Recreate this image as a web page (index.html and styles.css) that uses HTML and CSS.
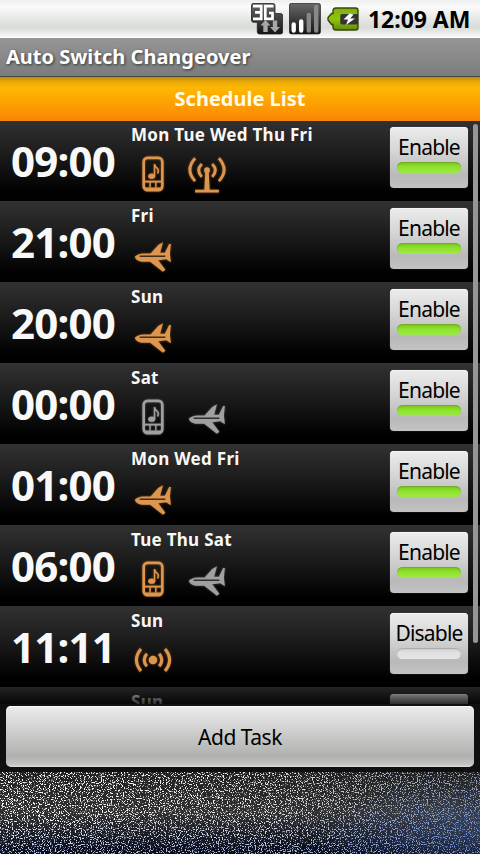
FILE: index.html
```
<!DOCTYPE html>
<html lang="en">
<head>
<meta charset="utf-8">
<title>Auto Switch Changeover</title>
<link rel="stylesheet" href="styles.css">
</head>
<body>
<svg class="defs" width="0" height="0" aria-hidden="true">
  <defs>
    <linearGradient id="dark" x1="0" y1="0" x2="0" y2="1"><stop offset="0" stop-color="#686868"/><stop offset="1" stop-color="#141414"/></linearGradient>
    <linearGradient id="green" x1="0" y1="0" x2="0" y2="1"><stop offset="0" stop-color="#83ad10"/><stop offset=".5" stop-color="#8fc50b"/><stop offset="1" stop-color="#638c08"/></linearGradient>
    <symbol id="phone" viewBox="0 0 40 40">
      <rect x="10.2" y="3" width="19.6" height="34" rx="4" fill="none" stroke="currentColor" stroke-width="2.800"/>
      <path d="M10 28H30" stroke="currentColor" stroke-width="2"/>
      <path d="M10 35H30M16.9 28v6M23 28v6" stroke="currentColor" stroke-width="1.500"/>
      <ellipse cx="18.6" cy="22.3" rx="3.7" ry="2.7" fill="currentColor"/>
      <path d="M21.6 22.5V9.5q.5 3.2 3.400 5.200q1.500 2.200-.3 4.800" fill="none" stroke="currentColor" stroke-width="1.600"/>
    </symbol>
    <symbol id="tower" viewBox="0 0 40 40">
      <path d="M20 16V37M7.500 38H32.500" fill="none" stroke="currentColor" stroke-width="2.700"/>
      <path d="M18.200 17L17.200 38h5.600L21.800 17z" fill="currentColor"/>
      <circle cx="20" cy="16" r="3" fill="currentColor"/>
      <path d="M14.500 9.500q-6.500 6.500 0 13.500M25.500 9.500q6.500 6.500 0 13.500M7.500 3.500q-11 12 0 24M32.500 3.500q11 12 0 24" fill="none" stroke="currentColor" stroke-width="3"/>
    </symbol>
    <symbol id="waves" viewBox="0 0 40 40">
      <circle cx="20" cy="20" r="4.500" fill="currentColor"/>
      <path d="M13.500 13.500q-5.500 6.500 0 13M26.500 13.500q5.500 6.500 0 13M7.300 8.500q-9.500 11.500 0 23M32.700 8.500q9.500 11.500 0 23" fill="none" stroke="currentColor" stroke-width="3.200"/>
    </symbol>
    <symbol id="plane" viewBox="0 0 40 40">
      <path d="M.8 21.800Q4 18.500 10 18.300H17.500L25.500 9.500L30.500 6.500L27.500 17.500H32.500L37 8.500H38.800L37.800 18.500L38.800 27.500L34 24.500L25.500 25.500L33 35.500L30.500 37.500L17 27H8Q2 26 .8 21.800z" fill="currentColor"/>
      <path d="M6 21.300H33" stroke="#000" stroke-opacity=".7" stroke-width="1.600"/>
    </symbol>
  </defs>
</svg>
<main class="screen">
  <header class="status">
    <svg class="sys" width="32" height="32" viewBox="0 0 32 32">
      <path d="M2 .5H22q2 0 2 2V10.500H29.500q2.200 0 2.200 2.200V28.800q0 2.200-2.200 2.200H8.500Q6.300 31 6.300 28.800V19.300H2.500Q.5 19.300 .5 17.300V2.500Q.5 .5 2 .5z" fill="url(#dark)" stroke="#222" stroke-width=".8"/>
      <path d="M2 3.200H10.200V15.800H2M4 9.300H10M22.500 3.200H14.300V15.800H21.500V10H18" fill="none" stroke="#fff" stroke-width="2.700"/>
      <path d="M14.500 17L19.500 22.500H16.700V29H12.300V22.500H9.500zM24 29.500L19 24H21.800V17.500H26.200V24H29z" fill="#a8a8a8"/>
    </svg>
    <svg class="sys" width="32" height="32" viewBox="0 0 32 32">
      <rect x=".4" y=".4" width="31" height="30.500" rx="2" fill="url(#dark)" stroke="#222" stroke-width=".8"/>
      <g stroke-width="4.400" stroke-linecap="round"><path d="M4.700 21.500V27.500M12.200 18.500V27.500" stroke="#fff"/><path d="M19.800 12V27.500M27.200 4V27.500" stroke="#888"/></g>
    </svg>
    <svg class="sys" width="32" height="24" viewBox="0 0 32 24">
      <path d="M9 1H28.500q2.500 0 2.500 2.500V20.500q0 2.500-2.500 2.500H9Q6 23 6 20V17.500H4.500L1 13V10.500L4.500 6.500H6V4Q6 1 9 1z" fill="url(#green)" stroke="#37460f" stroke-width="1.400"/>
      <path d="M15 7H31V17.500H15q-1.700 0-1.700-1.700V8.700Q13.300 7 15 7z" fill="#343434"/>
      <path d="M22.500 6.500L16.500 12.500H21L19 18L28 11.500H23.300L26.500 7.500z" fill="#fff"/>
    </svg>
    <span class="clock">12:09 AM</span>
  </header>
  <div class="title"><span>Auto Switch Changeover</span></div>
  <h1 class="heading"><span>Schedule List</span></h1>
  <section class="list">
    <ul class="rows">
      <li class="row"><time class="time">09:00</time><div class="info"><p class="days">Mon Tue Wed Thu Fri</p><div class="icons"><svg class="ico"><use href="#phone"/></svg><svg class="ico"><use href="#tower"/></svg></div></div><button class="toggle on">Enable</button></li>
      <li class="row"><time class="time">21:00</time><div class="info"><p class="days">Fri</p><div class="icons"><svg class="ico"><use href="#plane"/></svg></div></div><button class="toggle on">Enable</button></li>
      <li class="row"><time class="time">20:00</time><div class="info"><p class="days">Sun</p><div class="icons"><svg class="ico"><use href="#plane"/></svg></div></div><button class="toggle on">Enable</button></li>
      <li class="row"><time class="time">00:00</time><div class="info"><p class="days">Sat</p><div class="icons"><svg class="ico off"><use href="#phone"/></svg><svg class="ico off"><use href="#plane"/></svg></div></div><button class="toggle on">Enable</button></li>
      <li class="row"><time class="time">01:00</time><div class="info"><p class="days">Mon Wed Fri</p><div class="icons"><svg class="ico"><use href="#plane"/></svg></div></div><button class="toggle on">Enable</button></li>
      <li class="row"><time class="time">06:00</time><div class="info"><p class="days">Tue Thu Sat</p><div class="icons"><svg class="ico"><use href="#phone"/></svg><svg class="ico off"><use href="#plane"/></svg></div></div><button class="toggle on">Enable</button></li>
      <li class="row"><time class="time">11:11</time><div class="info"><p class="days">Sun</p><div class="icons"><svg class="ico"><use href="#waves"/></svg></div></div><button class="toggle">Disable</button></li>
      <li class="row"><time class="time"></time><div class="info"><p class="days">Sun</p></div><button class="toggle blank"></button></li>
    </ul>
    <i class="fade"></i>
    <i class="scrollbar"></i>
  </section>
  <footer class="footer"><button class="add"><span>Add Task</span></button></footer>
  <svg class="noise" width="480" height="82" viewBox="0 0 480 82">
    <defs>
      <filter id="grain" x="0" y="0" width="100%" height="100%" color-interpolation-filters="sRGB">
        <feTurbulence type="fractalNoise" baseFrequency=".81 .87" numOctaves="3" seed="7"/>
        <feColorMatrix values="0 0 0 0 1  0 0 0 0 1  0 0 0 0 1  0 9 0 0 -4.900" result="g"/>
        <feComposite in="SourceGraphic" in2="g" operator="in"/>
      </filter>
      <linearGradient id="ground" x1="0" y1="0" x2="0" y2="1"><stop offset="0" stop-color="#202020"/><stop offset=".5" stop-color="#303030"/><stop offset="1" stop-color="#070b18"/></linearGradient>
      <linearGradient id="speck" x1="0" y1="0" x2="1" y2="0"><stop offset="0" stop-color="#fff"/><stop offset=".55" stop-color="#e4e4e4"/><stop offset="1" stop-color="#8c9ab4"/></linearGradient>
      <linearGradient id="blueFloor" x1="0" y1="0" x2="0" y2="1"><stop offset=".5" stop-color="#6488e0" stop-opacity="0"/><stop offset="1" stop-color="#7898e8" stop-opacity=".55"/></linearGradient>
      <radialGradient id="glow" gradientUnits="userSpaceOnUse" cx="0" cy="0" r="1" gradientTransform="translate(480 65) scale(170 60)"><stop offset="0" stop-color="#6c90e4" stop-opacity=".8"/><stop offset="1" stop-color="#6c90e4" stop-opacity="0"/></radialGradient>
    </defs>
    <rect width="480" height="82" fill="url(#ground)"/>
    <rect width="480" height="82" fill="url(#glow)" opacity=".3"/>
    <g filter="url(#grain)"><rect width="480" height="82" fill="url(#speck)"/><rect width="480" height="82" fill="url(#blueFloor)"/><rect width="480" height="82" fill="url(#glow)"/></g>
  </svg>
</main>
</body>
</html>
```
FILE: styles.css
```
* { box-sizing: border-box; }
body { margin: 0; background: #000; font-family: "Noto Sans", "Open Sans", sans-serif; }
.defs { position: absolute; }
.screen { width: 480px; height: 854px; overflow: hidden; display: flex; flex-direction: column; }
.status { height: 38px; flex: none; display: flex; align-items: center; justify-content: flex-end; gap: 6px; padding-right: 9px; background: linear-gradient(#eef0ef, #fafbfa 18%, #e6e8e5 50%, #d8dbd7 72%, #f3f4f2 94%, #fff); }
.sys { display: block; flex: none; }
.clock { width: 103px; margin-left: 3px; font-size: 23px; letter-spacing: -.05px; line-height: 38px; font-weight: 700; white-space: nowrap; color: #000; }
.title { height: 39px; flex: none; padding-left: 6px; line-height: 37px; font-size: 20px; font-weight: 700; color: #fff; text-shadow: 1px 1px 3px #333; background: linear-gradient(#969696, #7c7c7c); border-bottom: 1px solid #444; white-space: nowrap; }
.heading { margin: 0; height: 44px; flex: none; line-height: 43px; text-align: center; font-size: 20px; font-weight: 700; color: #fffbe8; background: linear-gradient(#b88c08, #edab04 12%, #fcb703 25%, #fe9d02 65%, #f98506); }
.list { position: relative; height: 583px; flex: none; overflow: hidden; background: #000; }
.rows { list-style: none; margin: -1px 0 0; padding: 0; }
.row { height: 81px; display: flex; align-items: flex-start; padding-right: 12px; background: linear-gradient(#323232, #1a1a1a 45%, #000 90%); }
.time { width: 131px; padding-left: 11px; font-size: 42px; letter-spacing: -.8px; line-height: 82px; font-weight: 700; color: #f8f8f8; white-space: nowrap; }
.info { flex: 1; }
.days { margin: 0; padding-top: 3px; font-size: 17px; letter-spacing: .28px; line-height: 24px; font-weight: 700; color: #f8f8f8; white-space: nowrap; }
.icons { display: flex; gap: 16px; padding: 8px 0 0 3px; }
.ico { display: block; width: 38px; height: 38px; color: #dc9650; filter: drop-shadow(0 0 1px #8b4d18); }
.ico.off { color: #a0a0a0; filter: drop-shadow(0 0 1px #555); }
button { font: inherit; border: 0; padding: 0; color: #000; }
.toggle { width: 78px; height: 61px; margin-top: 7px; display: flex; flex-direction: column; align-items: center; border-radius: 4px; font-size: 21px; letter-spacing: -.8px; line-height: 40px; background: linear-gradient(#ececec, #d5d5d5 40%, #b9b9b9 80%, #c3c3c3); box-shadow: inset 0 1px #f5f5f5, 0 0 1px #777; }
.toggle::after { content: ""; width: 64px; height: 11px; margin-top: -5px; border-radius: 6px; background: linear-gradient(#ccc, #e0e0e0 40%, #e6e6e6); box-shadow: inset 0 1px 1px #aaa; }
.toggle.on::after { background: linear-gradient(#79c41a, #8ee22b 45%, #9ce94b); box-shadow: inset 0 1px 1px #71a82c; }
.toggle.blank::after { display: none; }
.fade { position: absolute; left: 0; right: 0; bottom: 0; height: 19px; background: linear-gradient(rgba(0,0,0,.2), rgba(0,0,0,.8)); }
.scrollbar { position: absolute; top: 3px; right: 2px; width: 5px; height: 519px; border-radius: 3px; background: #969696; }
.footer { height: 68px; flex: none; padding: 2px 6px 5px; background: #101010; }
.add { display: block; width: 468px; height: 61px; border-radius: 5px; font-size: 21px; letter-spacing: -.5px; line-height: 63px; background: linear-gradient(#ececec, #d6d7d6 30%, #afb1ae 83%, #c5c6c4 96%, #ddd); box-shadow: inset 0 1px #fafafa; }
.noise { display: block; flex: none; }
```
